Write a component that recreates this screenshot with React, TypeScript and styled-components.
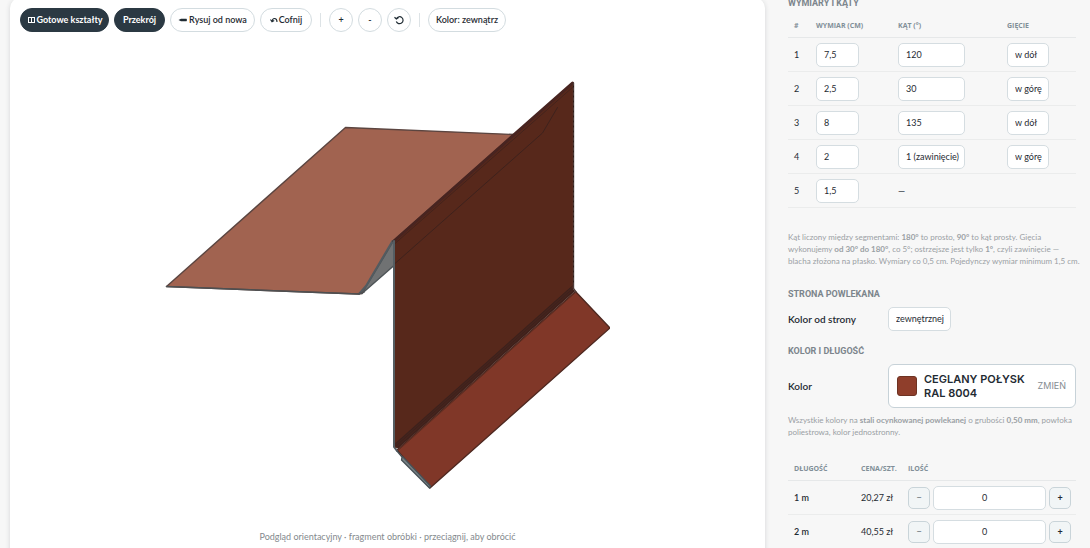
import React, { useState } from "react";
import styled, { createGlobalStyle } from "styled-components";

const GlobalStyle = createGlobalStyle`
  * { box-sizing: border-box; }
  body {
    margin: 0;
    background: #f7f7f7;
    color: #1f2b33;
    font: 9px/12px Lato, "Open Sans", sans-serif;
  }
  button, input, select { font: inherit; color: inherit; }
`;

const Page = styled.main`
  display: grid;
  grid-template-columns: minmax(0, 1fr) 288px;
  gap: 23px;
  height: 100vh;
  padding: 0 14px 0 10px;
  overflow: hidden;
`;

const Preview = styled.section`
  display: flex;
  flex-direction: column;
  align-items: center;
  margin: -2px 0 -20px;
  padding: 10px;
  border-radius: 10px;
  background: #fff;
  box-shadow: 0 1px 5px rgba(31, 43, 51, 0.16);
`;

const Toolbar = styled.div`
  display: flex;
  align-self: stretch;
  align-items: center;
  gap: 5px;
`;

const ToolButton = styled.button<{ $width: number; $dark?: boolean }>`
  display: inline-flex;
  align-items: center;
  justify-content: center;
  gap: 1px;
  width: ${(p) => p.$width}px;
  height: 24px;
  padding: 0;
  border: 1px solid ${(p) => (p.$dark ? "#2b3943" : "#d3dce0")};
  border-radius: 12px;
  background: ${(p) => (p.$dark ? "#2b3943" : "#fff")};
  color: ${(p) => (p.$dark ? "#fff" : "#1f2b33")};
  font-weight: ${(p) => (p.$dark ? 700 : 600)};
  white-space: nowrap;
  cursor: pointer;
`;

const Divider = styled.span`
  width: 1px;
  height: 14px;
  margin: 0 3px;
  background: #dde3e6;
`;

const Drawing = styled.svg`
  width: 445px;
  max-width: 100%;
  height: 408px;
  margin-top: 49px;
  flex: none;
`;

const Caption = styled.p`
  margin: 42px 0 0;
  color: #84898d;
`;

const Sidebar = styled.aside`
  display: flex;
  flex-direction: column;
  margin-top: -4px;
`;

const Heading = styled.h2`
  margin: 0;
  color: #7c858c;
  font: 700 9px/14px Roboto, sans-serif;
  text-transform: uppercase;
`;

const Table = styled.table`
  width: 100%;
  table-layout: fixed;
  border-collapse: collapse;
`;

const HeadCell = styled.th<{ $width?: number; $pad?: number }>`
  width: ${(p) => (p.$width ? `${p.$width}px` : "auto")};
  padding: 0 0 5px ${(p) => p.$pad ?? 0}px;
  border-bottom: 1px solid #e6e8e9;
  color: #818f98;
  font: 700 7px/12px "Open Sans", sans-serif;
  text-align: left;
  text-transform: uppercase;
  white-space: nowrap;
`;

const Cell = styled.td<{ $pad?: number }>`
  height: 34px;
  padding: 0 0 0 ${(p) => p.$pad ?? 0}px;
  border-bottom: 1px solid #ebecec;
`;

const SegmentTable = styled(Table)`
  margin-top: 10px;
`;

const Length = styled.span`
  font-weight: 600;
`;

const TextInput = styled.input`
  display: block;
  width: 43px;
  height: 24px;
  padding: 0 7px;
  border: 1px solid #d5dde1;
  border-radius: 5px;
  background: #fff;
`;

const CountInput = styled(TextInput)`
  width: 100%;
  min-width: 0;
  padding: 0 17px 0 7px;
  text-align: center;
`;

const Select = styled.select<{ $width: number }>`
  display: block;
  width: ${(p) => p.$width}px;
  height: 24px;
  padding: 0 0 0 7px;
  border: 1px solid #d5dde1;
  border-radius: 5px;
  background: #fff;
  appearance: none;
`;

const Hint = styled.p<{ $top: number; $bottom: number }>`
  margin: ${(p) => p.$top}px 0 ${(p) => p.$bottom}px;
  color: #9aa0a4;
  font-size: 8px;
  line-height: 12px;
  white-space: nowrap;
`;

const Field = styled.div<{ $bottom?: number }>`
  display: grid;
  grid-template-columns: 100px minmax(0, 1fr);
  align-items: center;
  margin: 6px 0 ${(p) => p.$bottom ?? 0}px;
`;

const FieldLabel = styled.label`
  font-size: 10px;
  font-weight: 600;
`;

const ColorButton = styled.button`
  display: flex;
  align-items: center;
  gap: 7px;
  height: 44px;
  padding: 0 9px 0 8px;
  border: 1px solid #c7d2d8;
  border-radius: 6px;
  background: #fff;
  font-family: Inter, sans-serif;
  text-align: left;
  cursor: pointer;
`;

const Swatch = styled.span`
  width: 20px;
  height: 20px;
  border: 1px solid #6e3323;
  border-radius: 3px;
  background: #8f3e2b;
`;

const ColorName = styled.span`
  flex: 1;
  font-size: 11px;
  font-weight: 600;
  line-height: 14px;
  white-space: nowrap;
`;

const Change = styled.span`
  color: #858c91;
`;

const Stepper = styled.div`
  display: grid;
  grid-template-columns: 22px minmax(0, 1fr) 22px;
  align-items: center;
  gap: 3px;
  padding-right: 5px;
`;

const StepButton = styled.button`
  height: 22px;
  padding: 0;
  border: 1px solid #c9d4d9;
  border-radius: 5px;
  background: #f1f5f6;
  font-weight: 700;
  cursor: pointer;
  &:disabled { color: #7f898f; }
`;

const segments = [
  { size: "7,5", angle: "120", bend: "w dół" },
  { size: "2,5", angle: "30", bend: "w górę" },
  { size: "8", angle: "135", bend: "w dół" },
  { size: "2", angle: "1 (zawinięcie)", bend: "w górę" },
  { size: "1,5" },
];

const prices = [
  { length: "1 m", price: "20,27 zł" },
  { length: "2 m", price: "40,55 zł" },
];

const Profile = () => (
  <Drawing viewBox="165 81 445 408" role="img" aria-label="Podgląd obróbki" strokeLinejoin="round" strokeLinecap="round">
    <path d="M166.500 286.500 L345.500 127.500 L514 134.500 L394 240 L362 293.500 L358 294 Z" fill="#a16350" stroke="#5b4540" strokeWidth="1.400" />
    <path d="M394 240 L394 265.500 L362 293.500 Z" fill="#707273" stroke="#4e5457" strokeWidth="1.400" />
    <path d="M392.500 241 L366 286 L359 294" fill="none" stroke="#535b60" strokeWidth="2" />
    <path d="M166.500 286.500 L358 294 L364 292" fill="none" stroke="#4e5052" strokeWidth="1.500" />
    <path d="M394 240.500 L572 82.500 L573.500 83 L573.500 289 L395.500 449 L394 446 Z" fill="#57281b" />
    <path d="M394 241 L572.500 83" fill="none" stroke="#482420" strokeWidth="3" />
    <path d="M395 243.500 L573 87" fill="none" stroke="#3e221d" strokeWidth="0.800" />
    <path d="M395 263.500 L542.500 133 L557.500 107.500" fill="none" stroke="#3e221d" strokeWidth="1" />
    <path d="M397 450 L575.500 291.500 L610 328 L430 488 Z" fill="#803728" stroke="#4d2820" strokeWidth="1.300" />
    <path d="M396 446.500 L573 289" fill="none" stroke="#45231c" strokeWidth="6" strokeLinecap="butt" />
    <path d="M396.500 443 L573 285.500 M396.500 445.500 L573.500 288 M397 448 L574 290.500" fill="none" stroke="#38211d" strokeWidth="0.700" />
    <path d="M397.500 451 L575.500 292.500" fill="none" stroke="#602e22" strokeWidth="1" />
    <path d="M573.500 83 L573.500 288.500 L576 292" fill="none" stroke="#4e3b38" strokeWidth="1.400" />
    <path d="M573.500 86 L573.500 286" fill="none" stroke="#2e1c18" strokeWidth="1" strokeDasharray="1 4" />
    <path d="M394 241 L394 447 L397 451" fill="none" stroke="#555e63" strokeWidth="2" />
    <path d="M397 451 L402 457 L401.500 460 L429.500 488 L430.500 486 L403 457" fill="#778084" stroke="#465055" strokeWidth="1.300" />
  </Drawing>
);

const ShapesIcon = () => (
  <svg width="9" height="8" viewBox="0 0 9 8" fill="none" stroke="currentColor" aria-hidden="true">
    <path d="M1 1.500H8M1 6.500H8M1.500 1V7M4.500 1V7M7.500 1V7" />
  </svg>
);

const PencilIcon = () => (
  <svg width="10" height="8" viewBox="0 0 10 8" aria-hidden="true">
    <path d="M0.500 4L3 2.700H8.500Q9.500 4 8.500 5.200H3Z" fill="currentColor" />
  </svg>
);

const UndoIcon = () => (
  <svg width="8" height="8" viewBox="0 0 8 8" fill="none" stroke="currentColor" aria-hidden="true">
    <path d="M2 5.500C2 1.500 7 1.500 7 6M0.500 3.500L2 5.700L4.200 4.500" strokeWidth="1.100" />
  </svg>
);

const ResetIcon = () => (
  <svg width="10" height="10" viewBox="0 0 10 10" fill="none" stroke="currentColor" strokeWidth="1.200" aria-hidden="true">
    <path d="M2.500 3.500A3.500 3.500 0 1 1 2.300 6.500M0.500 2.200L2.400 4L4.600 2.600" />
  </svg>
);

export default function App() {
  const [counts, setCounts] = useState(prices.map(() => 0));
  const change = (index: number, value: number) =>
    setCounts((all) => all.map((n, i) => (i === index ? Math.max(0, value || 0) : n)));

  return (
    <>
      <GlobalStyle />
      <Page>
        <Preview>
          <Toolbar>
            <ToolButton $width={89} $dark><ShapesIcon />Gotowe kształty</ToolButton>
            <ToolButton $width={51} $dark>Przekrój</ToolButton>
            <ToolButton $width={85}><PencilIcon />Rysuj od nowa</ToolButton>
            <ToolButton $width={52}><UndoIcon />Cofnij</ToolButton>
            <Divider />
            <ToolButton $width={24} aria-label="Powiększ">+</ToolButton>
            <ToolButton $width={24} aria-label="Pomniejsz">-</ToolButton>
            <ToolButton $width={24} aria-label="Resetuj widok"><ResetIcon /></ToolButton>
            <Divider />
            <ToolButton $width={78}>Kolor: zewnątrz</ToolButton>
          </Toolbar>
          <Profile />
          <Caption>Podgląd orientacyjny · fragment obróbki · przeciągnij, aby obrócić</Caption>
        </Preview>

        <Sidebar>
          <Heading>Wymiary i kąty</Heading>
          <SegmentTable>
            <thead>
              <tr>
                <HeadCell $width={28} $pad={6}>#</HeadCell>
                <HeadCell $width={82}>Wymiar (cm)</HeadCell>
                <HeadCell $width={109}>Kąt (°)</HeadCell>
                <HeadCell>Gięcie</HeadCell>
              </tr>
            </thead>
            <tbody>
              {segments.map((s, i) => (
                <tr key={i}>
                  <Cell $pad={6}>{i + 1}</Cell>
                  <Cell><TextInput defaultValue={s.size} aria-label={`Wymiar ${i + 1}`} /></Cell>
                  <Cell>
                    {s.angle ? (
                      <Select $width={67} aria-label={`Kąt ${i + 1}`}><option>{s.angle}</option></Select>
                    ) : "—"}
                  </Cell>
                  <Cell>
                    {s.bend && <Select $width={42} aria-label={`Gięcie ${i + 1}`}><option>{s.bend}</option></Select>}
                  </Cell>
                </tr>
              ))}
            </tbody>
          </SegmentTable>
          <Hint $top={23} $bottom={20}>
            Kąt liczony między segmentami: <b>180°</b> to prosto, <b>90°</b> to kąt prosty. Gięcia<br />
            wykonujemy <b>od 30° do 180°</b>, co 5°; ostrzejsze jest tylko <b>1°</b>, czyli zawinięcie —<br />
            blacha złożona na płasko. Wymiary co 0,5 cm. Pojedynczy wymiar minimum 1,5 cm.
          </Hint>

          <Heading>Strona powlekana</Heading>
          <Field $bottom={13}>
            <FieldLabel htmlFor="side">Kolor od strony</FieldLabel>
            <Select id="side" $width={63}><option>zewnętrznej</option></Select>
          </Field>

          <Heading>Kolor i długość</Heading>
          <Field>
            <FieldLabel htmlFor="color">Kolor</FieldLabel>
            <ColorButton id="color">
              <Swatch />
              <ColorName>CEGLANY POŁYSK<br />RAL 8004</ColorName>
              <Change>ZMIEŃ</Change>
            </ColorButton>
          </Field>
          <Hint $top={6} $bottom={25}>
            Wszystkie kolory na <b>stali ocynkowanej powlekanej</b> o grubości <b>0,50 mm</b>, powłoka<br />
            poliestrowa, kolor jednostronny.
          </Hint>

          <Table>
            <thead>
              <tr>
                <HeadCell $width={73} $pad={6}>Długość</HeadCell>
                <HeadCell $width={47}>Cena/szt.</HeadCell>
                <HeadCell>Ilość</HeadCell>
              </tr>
            </thead>
            <tbody>
              {prices.map((p, i) => (
                <tr key={p.length}>
                  <Cell $pad={6}><Length>{p.length}</Length></Cell>
                  <Cell>{p.price}</Cell>
                  <Cell>
                    <Stepper>
                      <StepButton disabled={counts[i] === 0} onClick={() => change(i, counts[i] - 1)} aria-label={`Mniej ${p.length}`}>−</StepButton>
                      <CountInput value={counts[i]} onChange={(e) => change(i, Number(e.target.value))} aria-label={`Ilość ${p.length}`} />
                      <StepButton onClick={() => change(i, counts[i] + 1)} aria-label={`Więcej ${p.length}`}>+</StepButton>
                    </Stepper>
                  </Cell>
                </tr>
              ))}
            </tbody>
          </Table>
        </Sidebar>
      </Page>
    </>
  );
}
